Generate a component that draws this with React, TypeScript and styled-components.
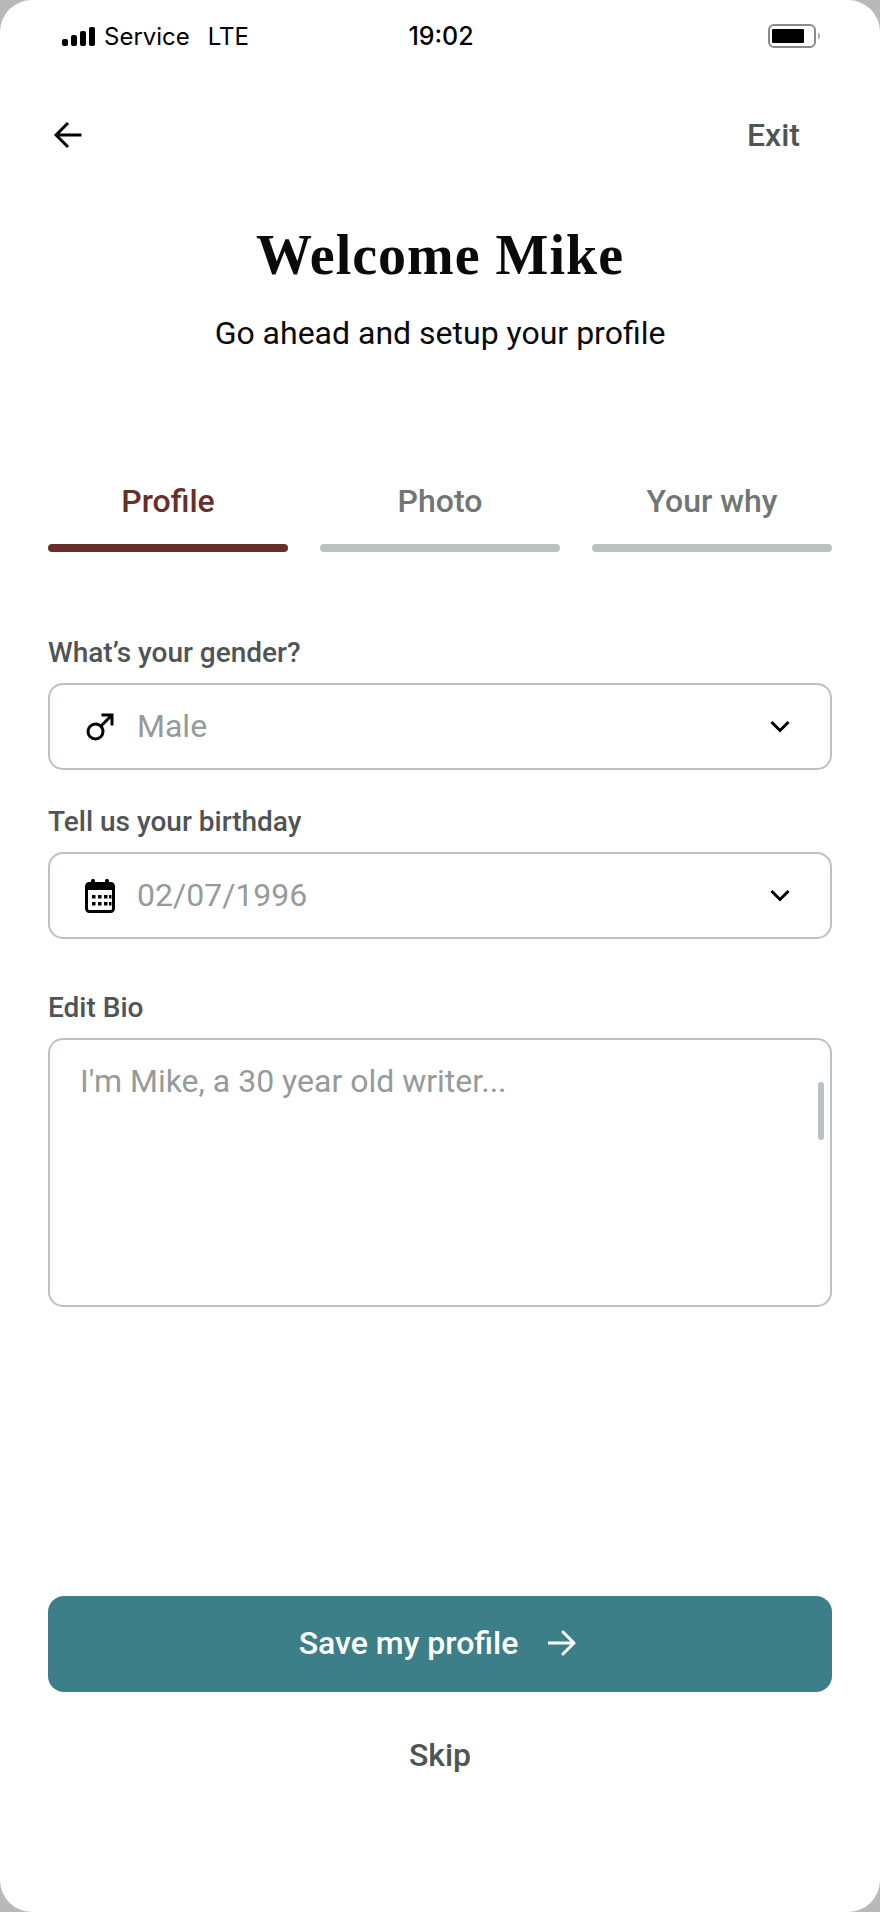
import React from "react";
import styled, { createGlobalStyle } from "styled-components";

const Global = createGlobalStyle`
  html, body { margin: 0; padding: 0; background: #b9b9b9; }
  * { box-sizing: border-box; }
`;

const Screen = styled.div`
  width: 880px;
  height: 1912px;
  background: #fff;
  border-radius: 32px;
  overflow: hidden;
  font-family: Roboto, "Liberation Sans", sans-serif;
  display: flex;
  flex-direction: column;
`;

const StatusBar = styled.div`
  height: 72px;
  padding: 0 60px 0 62px;
  display: grid;
  grid-template-columns: 1fr auto 1fr;
  align-items: center;
  font-family: Inter, "Liberation Sans", Arial, sans-serif;
  font-size: 24px;
  color: #000;
`;

const StatusLeft = styled.div`
  display: flex;
  align-items: center;
  gap: 9px;
`;

const Carrier = styled.span`
  margin-right: 9px;
`;

const Clock = styled.span`
  font-size: 25px;
  font-weight: 500;
`;

const StatusRight = styled.div`
  display: flex;
  justify-content: flex-end;
`;

const Nav = styled.div`
  margin-top: 33px;
  height: 60px;
  padding: 0 80px 0 54px;
  display: flex;
  align-items: center;
  justify-content: space-between;
`;

const NavText = styled.span`
  font-size: 32px;
  font-weight: 500;
  color: #505455;
`;

const Heading = styled.h1`
  margin: 58px 0 0;
  text-align: center;
  font-family: "Liberation Serif", serif;
  font-weight: 700;
  font-size: 56px;
  letter-spacing: 1px;
  line-height: 64px;
  color: #0a0a0a;
`;

const Sub = styled.p`
  margin: 26px 0 1px;
  text-align: center;
  font-size: 32px;
  line-height: 40px;
  color: #0a0a0a;
`;

const Tabs = styled.div`
  margin-top: 129px;
  padding: 0 48px;
  display: grid;
  grid-template-columns: repeat(3, 240px);
  column-gap: 32px;
`;

const Tab = styled.div<{ $active?: boolean }>`
  text-align: center;
  font-size: 32px;
  line-height: 36px;
  font-weight: 500;
  color: ${(p) => (p.$active ? "#682f28" : "#727575")};
  &::after {
    content: "";
    display: block;
    height: 8px;
    margin-top: 25px;
    border-radius: 4px;
    background: ${(p) => (p.$active ? "#682f28" : "#bcc2c0")};
  }
`;

const Form = styled.div`
  margin-top: 85px;
  padding: 0 48px;
  display: flex;
  flex-direction: column;
`;

const Label = styled.label<{ $gap?: number }>`
  display: block;
  margin-top: ${(p) => p.$gap ?? 0}px;
  font-size: 28px;
  line-height: 32px;
  font-weight: 500;
  color: #505455;
`;

const Field = styled.div`
  margin-top: 14px;
  height: 87px;
  border: 2px solid #bcc2c0;
  border-radius: 15px;
  padding: 0 40px 0 32px;
  display: flex;
  align-items: center;
  gap: 19px;
`;

const IconSlot = styled.span`
  width: 36px;
  height: 36px;
  display: flex;
  align-items: center;
  justify-content: center;
  flex: none;
`;

const FieldText = styled.span`
  flex: 1;
  padding-bottom: 2px;
  font-size: 32px;
  color: #959b9a;
`;

const Bio = styled.div`
  position: relative;
  margin-top: 14px;
  height: 269px;
  border: 2px solid #bcc2c0;
  border-radius: 15px;
  padding: 23px 30px;
  font-size: 32px;
  line-height: 36px;
  color: #959b9a;
`;

const ScrollThumb = styled.span`
  position: absolute;
  top: 42px;
  right: 6px;
  width: 6px;
  height: 58px;
  border-radius: 3px;
  background: #bcc2c0;
`;

const SaveButton = styled.button`
  margin: 289px 48px 0;
  height: 96px;
  border: 0;
  border-radius: 16px;
  padding: 0 5px 2px 0;
  background: #3c7f88;
  color: #fff;
  font-family: Roboto, sans-serif;
  font-size: 32px;
  font-weight: 500;
  display: flex;
  align-items: center;
  justify-content: center;
  gap: 30px;
`;

const Skip = styled.div`
  margin-top: 45px;
  text-align: center;
  font-size: 32px;
  line-height: 36px;
  font-weight: 500;
  color: #505455;
`;

const Chevron = () => (
  <svg width="20" height="13" viewBox="0 0 20 13" fill="none">
    <path d="M1.5 2 L10 10.500 L18.500 2" stroke="#000" strokeWidth="3" />
  </svg>
);

const Signal = () => (
  <svg width="33" height="19" viewBox="0 0 33 19" fill="#000">
    <rect x="0" y="12" width="6" height="7" rx="2" />
    <rect x="9" y="8" width="6" height="11" rx="2" />
    <rect x="18" y="4" width="6" height="15" rx="2" />
    <rect x="27" y="0" width="6" height="19" rx="2" />
  </svg>
);

const Battery = () => (
  <svg width="52" height="24" viewBox="0 0 52 24" fill="none">
    <rect x="1" y="1" width="46" height="22" rx="5" stroke="#8a8a8a" strokeWidth="2" />
    <rect x="4" y="5" width="32" height="14" rx="1" fill="#000" />
    <path d="M50 8.500c1.400.600 2 2 2 3.500s-.600 2.900-2 3.500z" fill="#a8a8a8" />
  </svg>
);

const MaleIcon = () => (
  <svg width="36" height="36" viewBox="0 0 24 24" fill="#000">
    <path d="M9 9c1.29 0 2.5.41 3.49 1.1L17.59 5H13V3h8v8h-2V6.41l-5.1 5.09c.69 1 1.1 2.2 1.1 3.5a6 6 0 0 1-6 6 6 6 0 0 1-6-6 6 6 0 0 1 6-6m0 2a4 4 0 0 0-4 4 4 4 0 0 0 4 4 4 4 0 0 0 4-4 4 4 0 0 0-4-4z" />
  </svg>
);

const CalendarIcon = () => (
  <svg width="30" height="34" viewBox="0 0 30 34" fill="none">
    <rect x="1.500" y="4.500" width="27" height="28" rx="3" stroke="#000" strokeWidth="3" />
    <rect x="1" y="4" width="28" height="7" fill="#000" />
    <rect x="6" y="0" width="4" height="6" rx="1.500" fill="#000" />
    <rect x="20" y="0" width="4" height="6" rx="1.500" fill="#000" />
    {[7, 13, 19].map((x) => (
      <rect key={`a${x}`} x={x} y="16" width="3.500" height="3.500" fill="#000" />
    ))}
    {[7, 13, 19].map((x) => (
      <rect key={`b${x}`} x={x} y="23" width="3.500" height="3.500" fill="#000" />
    ))}
    <rect x="24" y="16" width="2.500" height="3.500" fill="#000" />
    <rect x="24" y="23" width="2.500" height="3.500" fill="#000" />
  </svg>
);

const BackArrow = () => (
  <svg width="28" height="28" viewBox="0 0 28 28" fill="none">
    <path d="M27.500 14H2.500M14 2 L2 14 L14 26" stroke="#000" strokeWidth="3" />
  </svg>
);

const ForwardArrow = () => (
  <svg width="28" height="26" viewBox="0 0 28 26" fill="none">
    <path d="M0 13H26M15 2 L26 13 L15 24" stroke="#fff" strokeWidth="3" strokeLinecap="round" />
  </svg>
);

export default function App() {
  return (
    <>
      <Global />
      <Screen>
        <StatusBar>
          <StatusLeft>
            <Signal />
            <Carrier>Service</Carrier>
            <span>LTE</span>
          </StatusLeft>
          <Clock>19:02</Clock>
          <StatusRight>
            <Battery />
          </StatusRight>
        </StatusBar>
        <Nav>
          <BackArrow />
          <NavText>Exit</NavText>
        </Nav>
        <Heading>Welcome Mike</Heading>
        <Sub>Go ahead and setup your profile</Sub>
        <Tabs>
          <Tab $active>Profile</Tab>
          <Tab>Photo</Tab>
          <Tab>Your why</Tab>
        </Tabs>
        <Form>
          <Label>What’s your gender?</Label>
          <Field>
            <IconSlot>
              <MaleIcon />
            </IconSlot>
            <FieldText>Male</FieldText>
            <Chevron />
          </Field>
          <Label $gap={36}>Tell us your birthday</Label>
          <Field>
            <IconSlot>
              <CalendarIcon />
            </IconSlot>
            <FieldText>02/07/1996</FieldText>
            <Chevron />
          </Field>
          <Label $gap={53}>Edit Bio</Label>
          <Bio>
            I'm Mike, a 30 year old writer...
            <ScrollThumb />
          </Bio>
        </Form>
        <SaveButton>
          Save my profile
          <ForwardArrow />
        </SaveButton>
        <Skip>Skip</Skip>
      </Screen>
    </>
  );
}
